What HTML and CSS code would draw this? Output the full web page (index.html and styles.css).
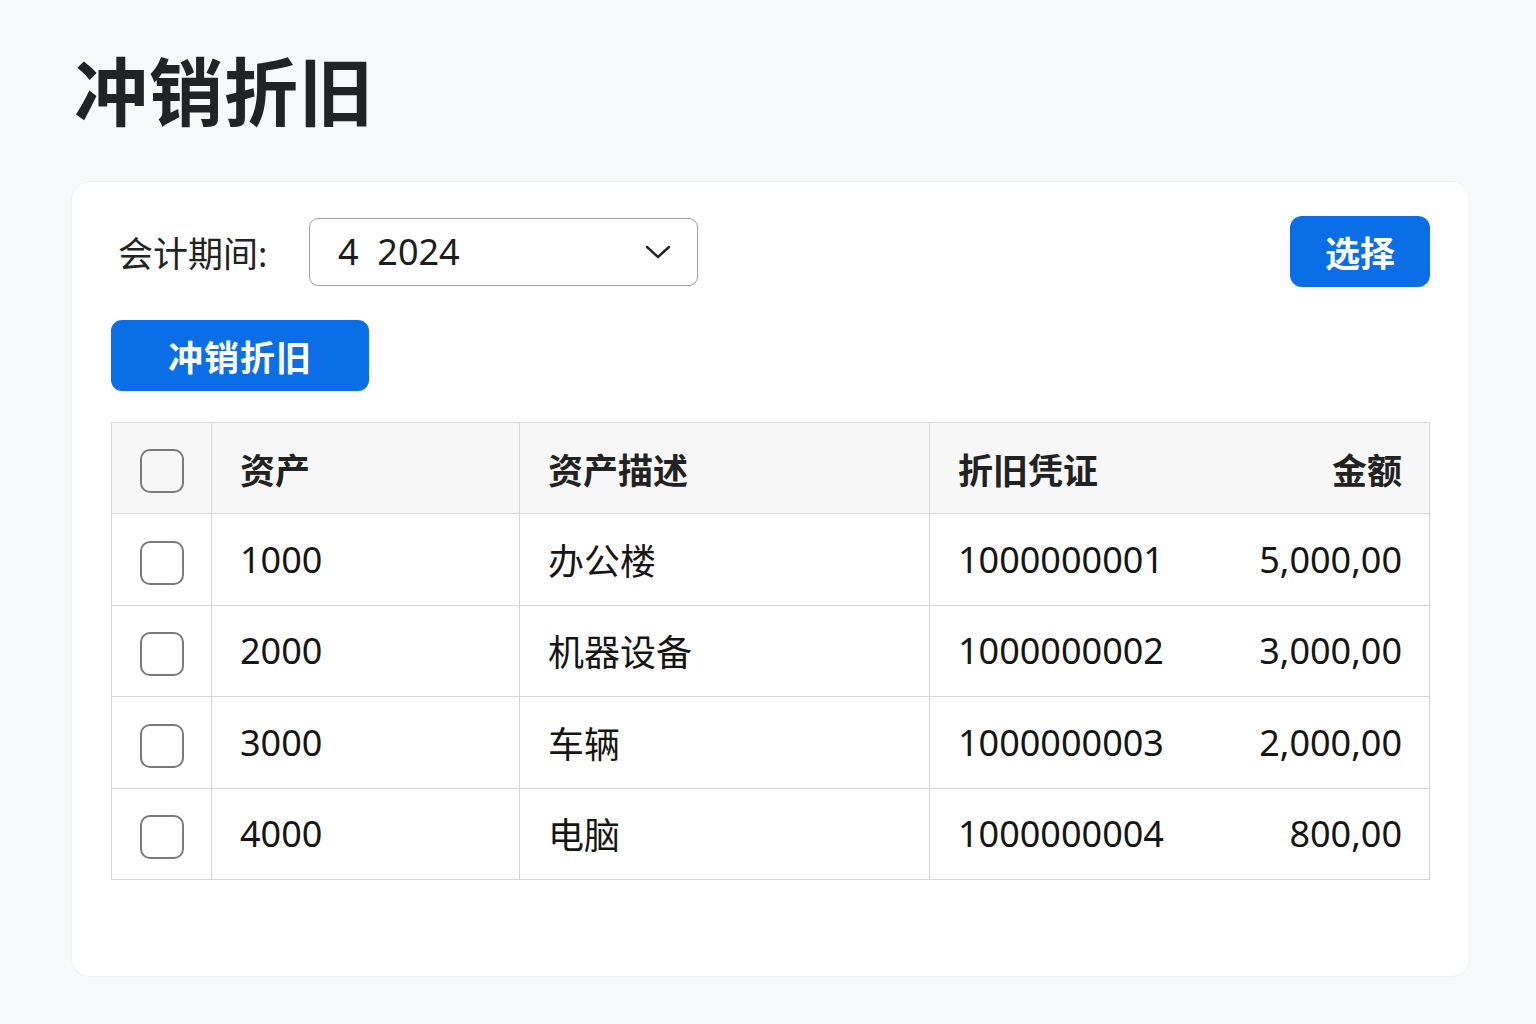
FILE: index.html
```html
<!DOCTYPE html>
<html lang="zh-CN">
<head>
    <meta charset="UTF-8">
    <title>冲销折旧</title>
    <link rel="stylesheet" href="styles.css">
</head>
<body>
<div class="page">
    <h1 class="title">冲销折旧</h1>
    <div class="card">
        <div class="toolbar">
            <label class="label">会计期间:</label>
            <div class="select">
                <span>4&nbsp;&nbsp;2024</span>
                <svg width="26" height="16" viewBox="0 0 26 16"><path d="M2 3 L13 13 L24 3" fill="none" stroke="#222" stroke-width="2.4" stroke-linecap="round" stroke-linejoin="round"/></svg>
            </div>
            <button class="btn btn-select">选择</button>
        </div>
        <div class="actions">
            <button class="btn btn-reverse">冲销折旧</button>
        </div>
        <table class="grid">
            <thead>
            <tr>
                <th class="col-check"><span class="check"></span></th>
                <th class="col-asset">资产</th>
                <th class="col-desc">资产描述</th>
                <th class="col-doc">折旧凭证</th>
                <th class="col-amt">金额</th>
            </tr>
            </thead>
            <tbody>
            <tr>
                <td class="col-check"><span class="check"></span></td>
                <td>1000</td>
                <td>办公楼</td>
                <td class="col-doc">1000000001</td>
                <td class="col-amt">5,000,00</td>
            </tr>
            <tr>
                <td class="col-check"><span class="check"></span></td>
                <td>2000</td>
                <td>机器设备</td>
                <td class="col-doc">1000000002</td>
                <td class="col-amt">3,000,00</td>
            </tr>
            <tr>
                <td class="col-check"><span class="check"></span></td>
                <td>3000</td>
                <td>车辆</td>
                <td class="col-doc">1000000003</td>
                <td class="col-amt">2,000,00</td>
            </tr>
            <tr>
                <td class="col-check"><span class="check"></span></td>
                <td>4000</td>
                <td>电脑</td>
                <td class="col-doc">1000000004</td>
                <td class="col-amt">800,00</td>
            </tr>
            </tbody>
        </table>
    </div>
</div>
</body>
</html>
```

FILE: styles.css
```css
body{margin:0;background:#f7f8f9;font-family:"Noto Sans","Noto Sans CJK SC",sans-serif;color:#1f2224;}
.page{padding:40px 67px 48px 72px;}
.title{margin:0 0 38px 2px;font-size:74px;font-weight:700;line-height:104px;color:#202426;letter-spacing:1px;}
.card{background:#fff;border-radius:18px;padding:34px 39px 96px 39px;box-shadow:0 0 0 1px #f0f1f2;}
.toolbar{display:flex;align-items:center;height:71px;}
.label{font-size:35px;margin-left:7px;width:191px;color:#222;}
.select{width:389px;height:68px;border:1.5px solid #a2a2a2;border-radius:9px;display:flex;align-items:center;justify-content:space-between;padding:0 26px 0 28px;box-sizing:border-box;font-size:36px;color:#1c1c1c;}
.btn{border:none;background:#0a6ee6;color:#fff;font-family:inherit;font-weight:700;font-size:35px;border-radius:12px;cursor:pointer;}
.btn-select{margin-left:auto;width:140px;height:71px;}
.actions{margin-top:33px;}
.btn-reverse{width:258px;height:71px;border-radius:11px;letter-spacing:1px;}
.grid{margin-top:31px;width:100%;border-collapse:collapse;font-size:36px;}
.grid th,.grid td{border:1.5px solid #d6d6d6;height:90.4px;padding:0 28px;text-align:left;}
.grid th{background:#f7f7f7;font-weight:700;color:#222;font-size:35px;}
.grid td{color:#151515;}
.grid .col-check{width:100px;padding:0;text-align:center;box-sizing:border-box;}
.grid .col-asset{width:308px;box-sizing:border-box;}
.grid .col-desc{width:410px;box-sizing:border-box;}
.grid .col-doc{border-right:none;}
.grid .col-amt{text-align:right;border-left:none;padding-right:27px;}
.check{display:inline-block;width:40px;height:40px;border:2px solid #7a7a7a;border-radius:10px;vertical-align:middle;}
```
